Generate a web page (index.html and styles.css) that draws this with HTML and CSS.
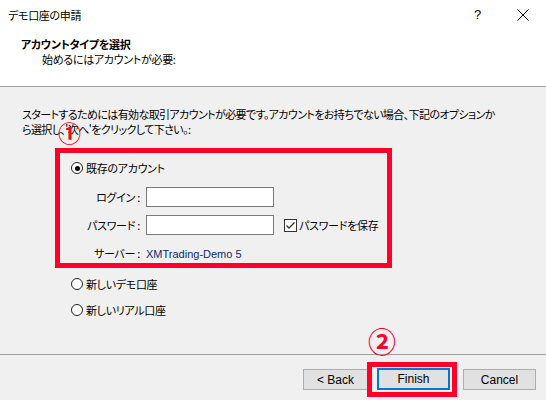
FILE: index.html
```html
<!DOCTYPE html>
<html lang="ja">

<head>
    <meta charset="UTF-8">
    <title>デモ口座の申請</title>

    <link rel="stylesheet" href="styles.css">
</head>

<body>

    <div class="dialog">

        <header class="top">
            <div class="titlebar">
                <span class="title">デモ口座の申請</span>
                <span class="help">?</span>
                <svg class="close" width="12" height="12" viewBox="0 0 12 12">
                    <path d="M0.5 0.5 L11.5 11.5 M11.5 0.5 L0.5 11.5" stroke="#000" stroke-width="1" fill="none" />
                </svg>
            </div>
            <div class="head">
                <h1>アカウントタイプを選択</h1>
                <p>始めるにはアカウントが必要:</p>
            </div>
        </header>

        <main class="content">
            <p class="intro">スタートするためには有効な取引アカウントが必要です。アカウントをお持ちでない場合、下記のオプションか<br>ら選択し、'次へ'をクリックして下さい。:</p>

            <div class="group">
                <label class="radio"><span class="dot valgt"></span>既存のアカウント</label>

                <div class="felter">
                    <span class="lbl">ログイン :</span>
                    <span class="input"></span>
                    <span></span>

                    <span class="lbl">パスワード :</span>
                    <span class="input"></span>
                    <label class="check">
                        <svg width="13" height="13" viewBox="0 0 13 13">
                            <rect x="0.5" y="0.5" width="12" height="12" fill="#fff" stroke="#333" />
                            <path d="M2.5 6.5 L5 9 L10.5 3.5" stroke="#333" stroke-width="1.3" fill="none" />
                        </svg>
                        パスワードを保存
                    </label>

                    <span class="lbl">サーバー :</span>
                    <span class="server">XMTrading-Demo 5</span>
                    <span></span>
                </div>
            </div>

            <label class="radio ny"><span class="dot"></span>新しいデモ口座</label>
            <label class="radio ny"><span class="dot"></span>新しいリアル口座</label>

            <!-- markeringer oven på dialogen -->
            <span class="mark en">①</span>
            <span class="mark to">②</span>
            <span class="ramme"></span>
        </main>

        <footer class="knapper">
            <button class="btn back">&lt; Back</button>
            <button class="btn finish">Finish</button>
            <button class="btn cancel">Cancel</button>
        </footer>

    </div>

</body>

</html>
```

FILE: styles.css
```css
body {
    margin: 0;
    font-family: "Noto Sans CJK JP", sans-serif;
    font-size: 11px;
    line-height: 16px;
    letter-spacing: -0.3px;
    font-feature-settings: "palt";
    color: #000;
}

.dialog {
    position: relative;
    width: 546px;
    height: 400px;
    background-color: #f0f0f0;
    overflow: hidden;
}

.top {
    background-color: #fff;
    height: 86px;
    border-bottom: 1px solid #a0a0a0;
}

.titlebar {
    display: flex;
    align-items: center;
    height: 29px;
    padding-left: 8px;
}

.title {
    flex: 1;
}

.help {
    font-family: "Liberation Sans", sans-serif;
    font-size: 13px;
    margin-right: 36px;
}

.close {
    margin-right: 17px;
}

.head {
    padding-left: 21px;
    padding-top: 8px;
}

.head h1 {
    margin: 0;
    font-size: 11px;
    font-weight: bold;
    line-height: 15px;
}

.head p {
    margin: 0;
    padding-left: 21px;
    line-height: 15px;
}

.content {
    padding: 20px 0 0 22px;
    height: 268px;
    border-bottom: 1px solid #a0a0a0;
    box-sizing: border-box;
}

.intro {
    margin: 0;
    line-height: 15px;
    white-space: nowrap;
    letter-spacing: -0.6px;
}

.group {
    margin: 11px 0 0 33px;
    width: 337px;
    height: 120px;
    box-sizing: border-box;
    border: 5px solid #ff0028;
    padding: 7px 0 0 11px;
}

.radio {
    display: flex;
    align-items: center;
    gap: 3px;
    height: 16px;
}

.dot {
    width: 10px;
    height: 10px;
    border: 1px solid #222;
    border-radius: 50%;
    background-color: #fff;
    position: relative;
}

.dot.valgt::after {
    content: "";
    position: absolute;
    left: 2.5px;
    top: 2.5px;
    width: 5px;
    height: 5px;
    border-radius: 50%;
    background-color: #000;
}

.felter {
    display: grid;
    grid-template-columns: 69px 128px auto;
    column-gap: 6px;
    row-gap: 8px;
    align-items: center;
    margin-top: 11px;
}

.lbl {
    text-align: right;
}

.input {
    height: 20px;
    box-sizing: border-box;
    background-color: #fff;
    border: 1px solid #7a7a7a;
}

.check {
    display: flex;
    align-items: center;
    gap: 2px;
    margin-left: 4px;
    white-space: nowrap;
}

.server {
    font-family: "Liberation Sans", sans-serif;
    letter-spacing: 0;
    color: #0d2a6a;
    margin-top: 3px;
}

.radio.ny {
    margin-left: 49px;
    margin-top: 8px;
}

.radio.ny + .radio.ny {
    margin-top: 10px;
}

.mark {
    position: absolute;
    color: #ff0028;
    font-weight: bold;
    line-height: 1;
    letter-spacing: 0;
}

.mark.en {
    left: 58px;
    top: 121px;
    font-size: 23px;
}

.mark.to {
    left: 368px;
    top: 327px;
    font-size: 28px;
}

.ramme {
    position: absolute;
    left: 367px;
    top: 362px;
    width: 90px;
    height: 35px;
    box-sizing: border-box;
    border: 5px solid #ff0028;
}

.knapper {
    display: flex;
    padding: 14px 0 0 303px;
}

.btn {
    font-family: "Liberation Sans", sans-serif;
    font-size: 12px;
    height: 21px;
    background-color: #e1e1e1;
    border: 1px solid #adadad;
    padding: 0;
    color: #000;
}

.back {
    width: 65px;
}

.finish {
    width: 73px;
    margin-left: 9px;
    border: 2px solid #0078d7;
    height: 22px;
    margin-top: -1px;
}

.cancel {
    width: 73px;
    margin-left: 13px;
}
```
